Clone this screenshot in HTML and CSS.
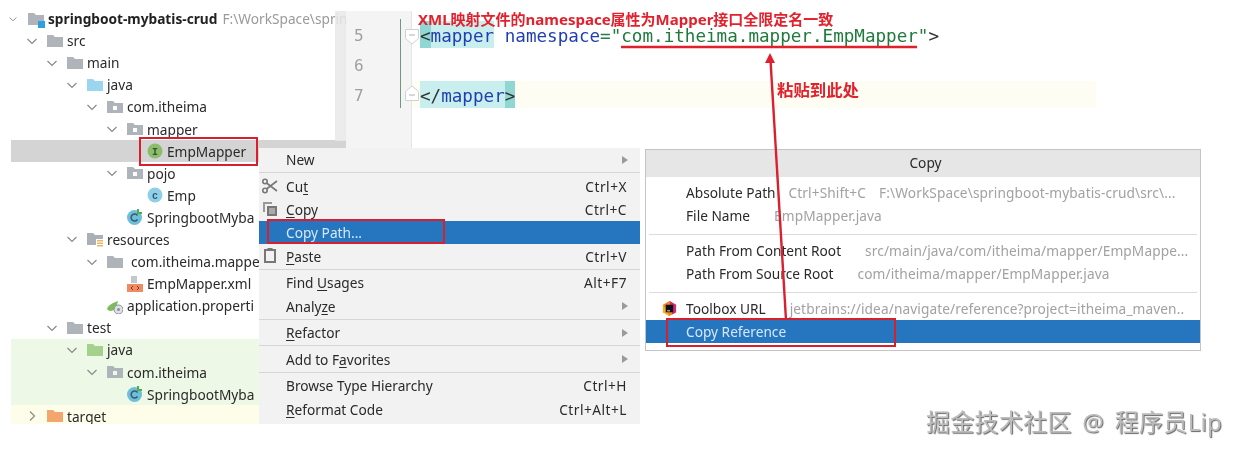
FILE: index.html
```html
<!DOCTYPE html>
<html lang="zh">
<head>
<meta charset="utf-8">
<title>Copy Reference</title>
<link rel="stylesheet" href="styles.css">
</head>
<body>
<svg class="defs" width="0" height="0" aria-hidden="true">
  <symbol id="folder" viewBox="0 0 16 16"><path d="M0 2h6l2 2h8v10H0z"/></symbol>
  <symbol id="pkg" viewBox="0 0 16 16"><path fill-rule="evenodd" d="M0 2h6l2 2h8v10H0zM6 7v4h4V7z"/></symbol>
  <symbol id="down" viewBox="0 0 12 12"><path d="M1.500 4L6 8.500 10.500 4" fill="none" stroke="#8a8a8a" stroke-width="1.200"/></symbol>
  <symbol id="right" viewBox="0 0 12 12"><path d="M4 1.500L8.500 6 4 10.500" fill="none" stroke="#8a8a8a" stroke-width="1.200"/></symbol>
  <symbol id="arrow" viewBox="0 0 8 10"><path d="M1 1l6 4-6 4z" fill="#9a9a9a"/></symbol>
  <symbol id="boot" viewBox="0 0 16 16">
    <circle cx="7.500" cy="8.500" r="7.500" fill="#6cbfdc"/>
    <path d="M10.500 6.500a3.500 3.500 0 1 0 0 4" fill="none" stroke="#3d5a68" stroke-width="1.500"/>
    <path d="M10 0h2v3h3v2h-5z" fill="#4fae4e"/>
  </symbol>
</svg>
<main class="canvas">
  <section class="tree">
    <div class="row d0"><svg class="chev small"><use href="#down"/></svg><svg class="ico c-gray"><use href="#folder"/></svg><span class="blue-dot"></span><b class="root">springboot-mybatis-crud</b><span class="path">F:\WorkSpace\sprin</span></div>
    <div class="row d1"><svg class="chev"><use href="#down"/></svg><svg class="ico c-gray"><use href="#folder"/></svg><span>src</span></div>
    <div class="row d2"><svg class="chev"><use href="#down"/></svg><svg class="ico c-gray"><use href="#folder"/></svg><span>main</span></div>
    <div class="row d3"><svg class="chev"><use href="#down"/></svg><svg class="ico c-blue"><use href="#folder"/></svg><span>java</span></div>
    <div class="row d4"><svg class="chev"><use href="#down"/></svg><svg class="ico c-gray"><use href="#pkg"/></svg><span>com.itheima</span></div>
    <div class="row d5"><svg class="chev"><use href="#down"/></svg><svg class="ico c-gray"><use href="#pkg"/></svg><span>mapper</span></div>
    <div class="row d6 selected"><i class="chev"></i><svg class="ico" viewBox="0 0 16 16"><circle cx="8" cy="8" r="7.500" fill="#8cbd6c"/><text x="8" y="11.500" class="glyph" fill="#35552a">I</text></svg><span>EmpMapper</span></div>
    <div class="row d5"><svg class="chev"><use href="#down"/></svg><svg class="ico c-gray"><use href="#pkg"/></svg><span>pojo</span></div>
    <div class="row d6"><i class="chev"></i><svg class="ico" viewBox="0 0 16 16"><circle cx="8" cy="8" r="7.500" fill="#8fd0e8"/><text x="8" y="11.500" class="glyph" fill="#2c5a70">c</text></svg><span>Emp</span></div>
    <div class="row d5"><i class="chev"></i><svg class="ico"><use href="#boot"/></svg><span>SpringbootMyba</span></div>
    <div class="row d3"><svg class="chev"><use href="#down"/></svg><svg class="ico" viewBox="0 0 16 16"><path d="M0 2h6l2 2h8v4H9v6H0z" fill="#aab0b6"/><path d="M10 9h6v1.500h-6zM10 11.500h6V13h-6zM10 14h6v1.500h-6z" fill="#e8b866"/></svg><span>resources</span></div>
    <div class="row d4"><svg class="chev"><use href="#down"/></svg><svg class="ico c-gray"><use href="#folder"/></svg><span class="spaced">com.itheima.mappe</span></div>
    <div class="row d5"><i class="chev"></i><svg class="ico" viewBox="0 0 16 16"><path d="M4 0h6v7H4z" fill="#c4c8cc"/><path d="M0 8h16v8H0z" fill="#ee8a64"/><path d="M6 10l-2 2 2 2M10 10l2 2-2 2" fill="none" stroke="#8a3a1c" stroke-width="1"/></svg><span>EmpMapper.xml</span></div>
    <div class="row d4"><i class="chev"></i><svg class="ico" viewBox="0 0 16 16"><path d="M0 11c1-4 6-6 11-8-1 5-3 10-8 10-1 0-2-1-3-2z" fill="#7dbb5e"/><circle cx="11.500" cy="11.500" r="4.500" fill="#dfe2e4" stroke="#8a8f94"/><circle cx="11.500" cy="11.500" r="1.500" fill="#8a8f94"/></svg><span>application.properti</span></div>
    <div class="row d2"><svg class="chev"><use href="#down"/></svg><svg class="ico c-gray"><use href="#folder"/></svg><span>test</span></div>
    <div class="row d3 green"><svg class="chev"><use href="#down"/></svg><svg class="ico c-green"><use href="#folder"/></svg><span>java</span></div>
    <div class="row d4 green"><svg class="chev"><use href="#down"/></svg><svg class="ico c-gray"><use href="#pkg"/></svg><span>com.itheima</span></div>
    <div class="row d5 green"><i class="chev"></i><svg class="ico"><use href="#boot"/></svg><span>SpringbootMyba</span></div>
    <div class="row d1 yellow"><svg class="chev"><use href="#right"/></svg><svg class="ico c-orange"><use href="#folder"/></svg><span>target</span></div>
  </section>
  <div class="tree-scroll"></div>

  <section class="editor">
    <div class="gutter">
      <span class="num">5</span><span class="num">6</span><span class="num">7</span>
      <span class="change"></span>
      <svg class="fold fold-open" viewBox="0 0 14 16"><path d="M.5.500h13v9L7 15 .5 9.500z" fill="#fff" stroke="#d0d0d0"/><path d="M4 6h6" stroke="#b0b0b0"/></svg>
      <svg class="fold fold-close" viewBox="0 0 14 16"><path d="M.5 15.500h13v-9L7 1 .5 6.500z" fill="#fff" stroke="#d0d0d0"/><path d="M4 10h6" stroke="#b0b0b0"/></svg>
    </div>
    <div class="code">
      <div class="line"><span class="tag"><span class="match">&lt;</span><span class="name">mapper</span></span> <span class="name">namespace</span><span class="eq">=</span><span class="str">"com.itheima.mapper.EmpMapper"</span>&gt;</div>
      <div class="line"></div>
      <div class="line current"><span class="tag">&lt;/<span class="name">mapper</span><span class="match">&gt;</span></span></div>
    </div>
  </section>

  <nav class="menu">
    <div class="item"><span class="label">New</span><svg class="sub"><use href="#arrow"/></svg></div>
    <hr>
    <div class="item"><svg class="micon" viewBox="0 0 16 16"><circle cx="3" cy="3.500" r="2.200" fill="none" stroke="#777" stroke-width="1.600"/><circle cx="3" cy="12.500" r="2.200" fill="none" stroke="#777" stroke-width="1.600"/><path d="M4.500 5L15 13M4.500 11L15 3" stroke="#777" stroke-width="1.600"/></svg><span class="label">Cu<u>t</u></span><kbd>Ctrl+X</kbd></div>
    <div class="item"><svg class="micon" viewBox="0 0 16 16"><path d="M1 1h9v2H3v8H1z" fill="#999"/><path d="M5 5h10v10H5z" fill="#777"/><path d="M7 7h6v6H7z" fill="#aaa"/></svg><span class="label"><u>C</u>opy</span><kbd>Ctrl+C</kbd></div>
    <div class="item active"><span class="label">Copy Path...</span></div>
    <div class="item"><svg class="micon" viewBox="0 0 16 16"><path d="M3 3h10v12H3z" fill="none" stroke="#777" stroke-width="2"/><path d="M5.500 1h5v3h-5z" fill="#777"/></svg><span class="label"><u>P</u>aste</span><kbd>Ctrl+V</kbd></div>
    <hr>
    <div class="item"><span class="label">Find <u>U</u>sages</span><kbd>Alt+F7</kbd></div>
    <div class="item"><span class="label">Analy<u>z</u>e</span><svg class="sub"><use href="#arrow"/></svg></div>
    <hr>
    <div class="item"><span class="label"><u>R</u>efactor</span><svg class="sub"><use href="#arrow"/></svg></div>
    <hr>
    <div class="item"><span class="label">Add to F<u>a</u>vorites</span><svg class="sub"><use href="#arrow"/></svg></div>
    <hr>
    <div class="item"><span class="label">Browse Type Hierarchy</span><kbd>Ctrl+H</kbd></div>
    <div class="item"><span class="label"><u>R</u>eformat Code</span><kbd>Ctrl+Alt+L</kbd></div>
  </nav>

  <section class="dialog">
    <header class="title">Copy</header>
    <div class="opt"><span class="key tight">Absolute Path</span><span class="hint tight">Ctrl+Shift+C</span><span class="hint">F:\WorkSpace\springboot-mybatis-crud\src\...</span></div>
    <div class="opt"><span class="key">File Name</span><span class="hint">EmpMapper.java</span></div>
    <hr>
    <div class="opt"><span class="key">Path From Content Root</span><span class="hint">src/main/java/com/itheima/mapper/EmpMappe...</span></div>
    <div class="opt"><span class="key">Path From Source Root</span><span class="hint">com/itheima/mapper/EmpMapper.java</span></div>
    <hr>
    <div class="opt"><svg class="tb" viewBox="0 0 16 16"><path d="M8 0l7 4v8l-7 4-7-4V4z" fill="#f0851e"/><path d="M8 0l7 4v8l-4 2.300z" fill="#d02a7a"/><path d="M1 12V4l3 5 4 7z" fill="#f5b021"/><path d="M4 4h8v8H4z" fill="#111"/><path d="M5.500 10h3v1h-3z" fill="#fff"/></svg><span class="key">Toolbox URL</span><span class="hint">jetbrains://idea/navigate/reference?project=itheima_maven..</span></div>
    <div class="opt active"><span class="key">Copy Reference</span></div>
  </section>

  <p class="note note-top">XML映射文件的namespace属性为Mapper接口全限定名一致</p>
  <p class="note note-paste">粘贴到此处</p>
  <div class="redbox box-file"></div>
  <div class="redbox box-path"></div>
  <div class="redbox box-ref"></div>
  <svg class="ink" viewBox="0 0 1239 453" aria-hidden="true">
    <path d="M621 47H917" stroke="#e0202c" stroke-width="2.400"/>
    <path d="M770.500 60L786 320" stroke="#d8202e" stroke-width="2.400"/>
    <path d="M770 53l-5 10h10z" fill="#e0202c"/>
  </svg>
  <p class="mark">掘金技术社区 @ 程序员Lip</p>
</main>
</body>
</html>
```
FILE: styles.css
```css
* { box-sizing: border-box; }
html, body { margin: 0; background: #fff; }
.defs { position: absolute; }
.canvas {
  position: relative; width: 1239px; height: 453px; overflow: hidden;
  background: #fff; color: #2a2a2a;
  font: 13.7px "Noto Sans", "Noto Sans CJK SC", sans-serif;
  filter: blur(.3px);
}

/* project tree */
.tree { position: absolute; left: 0; top: 7.500px; width: 346px; height: 416.500px; overflow: hidden; }
.row { display: flex; align-items: center; height: 22.100px; white-space: nowrap; gap: 4px; position: relative; }
.d0 { padding-left: 7px; }
.d1 { padding-left: 26px; }
.d2 { padding-left: 46px; }
.d3 { padding-left: 66px; }
.d4 { padding-left: 86px; }
.d5 { padding-left: 106px; }
.d6 { padding-left: 126px; }
.chev { width: 12px; height: 12px; flex: none; margin-right: 5px; }
.chev.small { transform: scale(.75); }
.ico { width: 16px; height: 16px; flex: none; }
.c-gray { fill: #aeb4b9; }
.c-blue { fill: #9ad6ee; }
.c-green { fill: #a3d28c; }
.c-orange { fill: #f3a76f; }
.blue-dot { position: absolute; left: 38px; top: 13px; width: 7px; height: 7px; background: #2e9fe0; }
.root { font-weight: 700; color: #222; }
.path { color: #9a9a9a; margin-left: 1px; }
.spaced { padding-left: 4px; }
.glyph { font: 700 10px "Liberation Mono", monospace; text-anchor: middle; }
.selected { background: linear-gradient(#d4d4d4, #d4d4d4) 11px 0 no-repeat; }
.green { background: linear-gradient(#eef8e6, #eef8e6) 11px 0 no-repeat; }
.yellow { background: linear-gradient(#fdfdea, #fdfdea) 11px 0 no-repeat; }
.tree-scroll { position: absolute; left: 335px; top: 11px; width: 11px; height: 137px; background: linear-gradient(rgba(232, 232, 232, .85) 0 130px, #d4d4d4 130px); }

/* editor */
.editor { position: absolute; left: 346px; top: 11px; width: 750px; height: 137px; display: flex; }
.gutter { position: relative; width: 66px; flex: none; background: #f4f4f4; border-right: 1px solid #e6e6e6; padding-top: 10px; display: flex; flex-direction: column; }
.num { height: 30px; padding-left: 8px; color: #a0a0a0; font: 16px/30px "DejaVu Sans Mono", monospace; }
.change { position: absolute; left: 54px; top: 8px; width: 1px; height: 89px; background: #6a9a84; }
.fold { position: absolute; left: 59px; width: 14px; height: 16px; }
.fold-open { top: 18px; }
.fold-close { top: 74px; }
.code { flex: 1; padding-top: 10px; font: 17.6px/30px "DejaVu Sans Mono", monospace; color: #333; }
.line { height: 30px; padding-left: 8px; white-space: pre; }
.line.current { margin-left: -66px; padding-left: 74px; background: linear-gradient(#fdfdf3, #fdfdf3) 0 0 / 100% 27px no-repeat; }
.tag { display: inline-block; height: 27px; background: #c9eeee; vertical-align: top; }
.match { background: #90d6d2; display: inline-block; height: 27px; }
.name { color: #1f3fb0; }
.eq { color: #2a7a4a; }
.str { color: #1f7a3c; }

/* context menu */
.menu { position: absolute; left: 259px; top: 148px; width: 381px; height: 276px; background: #f2f2f2; }
.menu hr { height: 1px; margin: 1px 0 1.300px; border: 0; background: #d6d6d6; }
.item { position: relative; display: flex; align-items: center; justify-content: space-between; height: 23.300px; padding: 0 13px 0 27px; color: #2a2a2a; }
.item.active { background: #2675bf; color: #d6e8f8; }
.item u { text-underline-offset: 2px; }
kbd { font: inherit; letter-spacing: .5px; }
.micon { position: absolute; left: 3px; top: 3px; width: 16px; height: 16px; }
.sub { width: 8px; height: 10px; margin-right: -2px; }

/* copy dialog */
.dialog { position: absolute; left: 645px; top: 149px; width: 556px; height: 202px; background: #fff; border: 1px solid #c4c4c4; }
.title { height: 27px; line-height: 25px; padding-left: 5px; background: #e6e6e6; text-align: center; color: #2a2a2a; }
.dialog hr { height: 1px; margin: 7px 3px 4px; border: 0; background: #dcdcdc; }
.opt { position: relative; display: flex; gap: 24px; height: 23px; line-height: 23px; padding-left: 40px; white-space: nowrap; overflow: hidden; }
.title + .opt { margin-top: 4px; }
.tight { margin-right: -11px; }
.hint { color: #a2a2a2; letter-spacing: .1px; }
.opt.active { background: #2675bf; color: #d6e8f8; }
.tb { position: absolute; left: 16px; top: 4px; width: 15px; height: 15px; }

/* annotations */
.note { position: absolute; margin: 0; color: #e4202c; font-weight: 700; white-space: nowrap; }
.note-top { left: 418px; top: 10px; font-size: 15px; line-height: 18px; }
.note-paste { left: 777px; top: 80px; font-size: 16.400px; line-height: 20px; }
.redbox { position: absolute; border: 2px solid #d7202e; }
.box-file { left: 139px; top: 137px; width: 119px; height: 29px; }
.box-path { left: 267px; top: 219px; width: 178px; height: 25px; }
.box-ref { left: 666px; top: 318px; width: 230px; height: 29px; }
.ink { position: absolute; left: 0; top: 0; width: 1239px; height: 453px; pointer-events: none; }
.mark { position: absolute; left: 926px; top: 405px; margin: 0; font-size: 24px; line-height: 34px; word-spacing: 4px; letter-spacing: .3px; color: #bcbcbc; text-shadow: 1px 1px 1px #666; white-space: nowrap; }
```
